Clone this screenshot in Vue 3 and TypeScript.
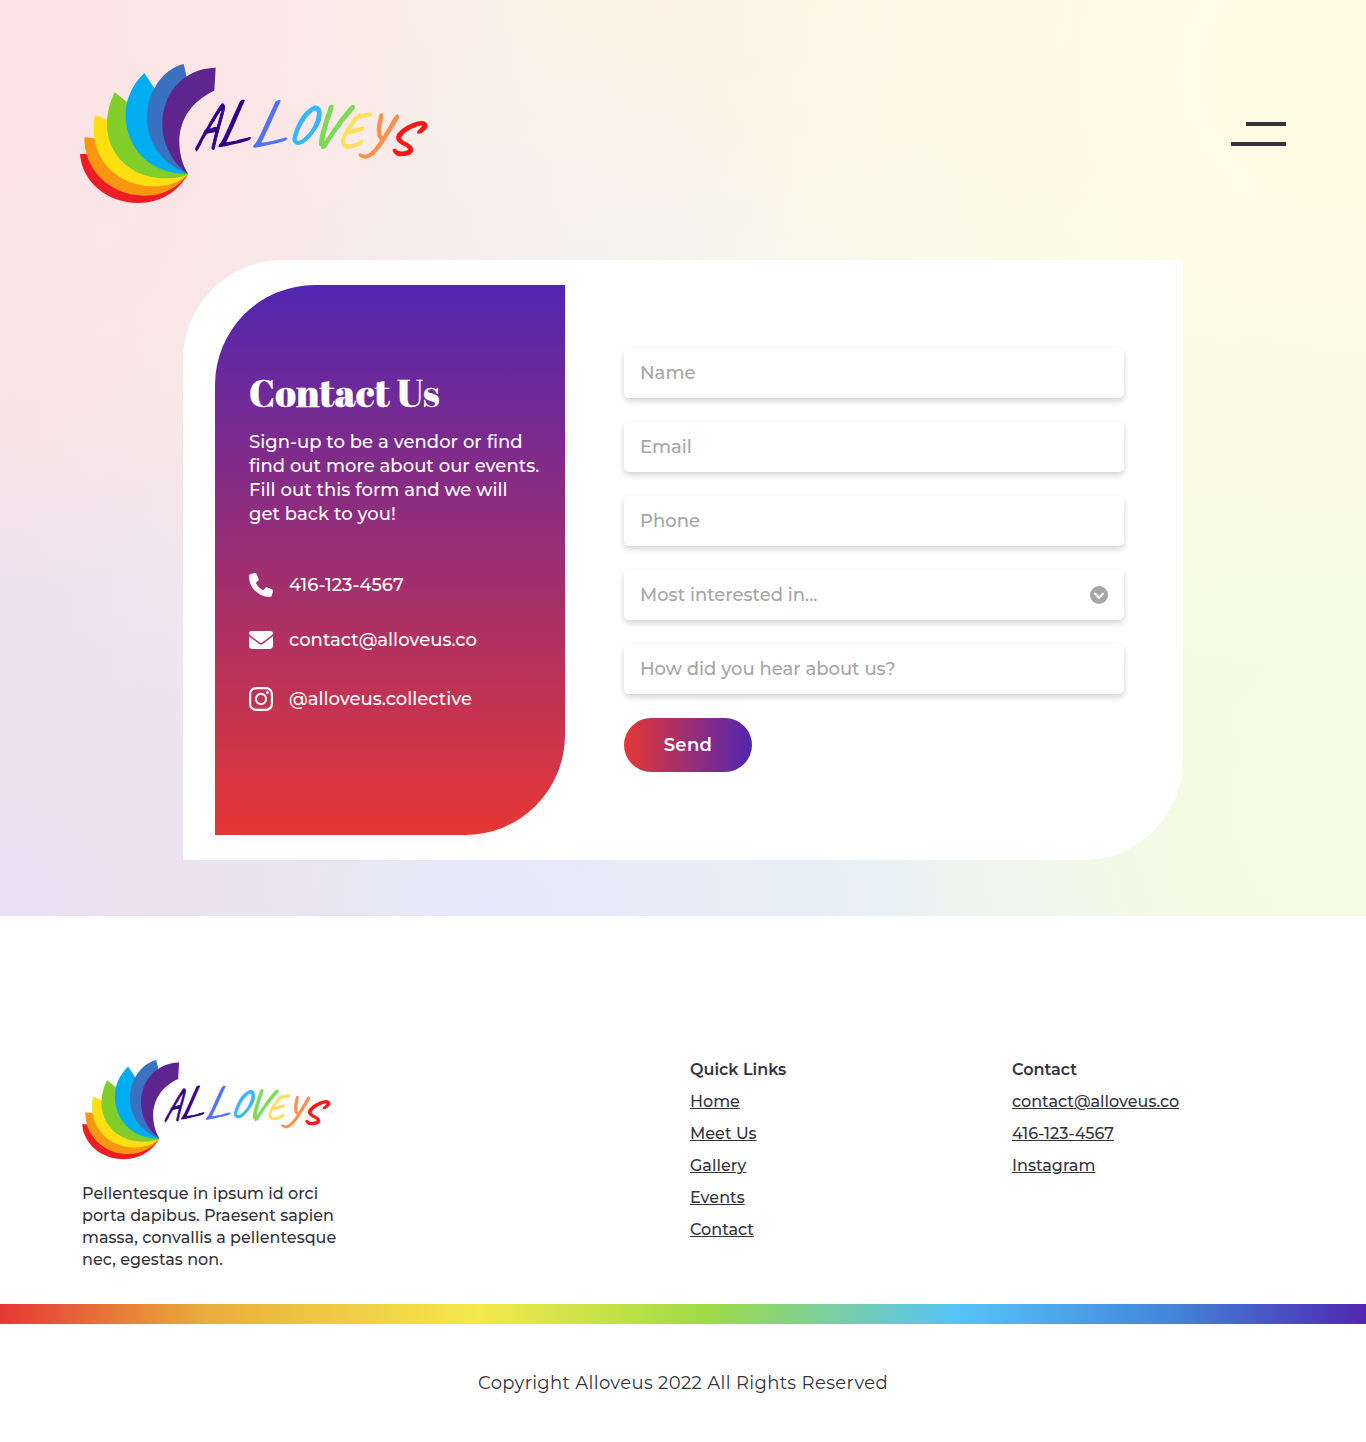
<script setup lang="ts">
interface Field { text: string; select?: boolean }

const petals = [
  { fill: '#ee1c25', d: 'M30 312H62L354 372C325 425 270 459 205 459C110 459 36 395 30 312Z' },
  { fill: '#f7960f', d: 'M43 261L80 266L354 372C325 412 280 437 225 437C115 437 41 355 43 261Z' },
  { fill: '#ffde12', d: 'M76 195L116 212L354 372C330 397 295 409 250 409C130 409 50 310 76 195Z' },
  { fill: '#81ce2a', d: 'M134 127L176 160L354 372C340 381 320 385 285 385C150 385 68 262 134 127Z' },
  { fill: '#00adf1', d: 'M223 69L258 122L290 260L354 372C235 372 167 290 167 195C167 150 185 105 223 69Z' },
  { fill: '#3a71c1', d: 'M341 42L352 90L285 200L300 300L354 372C285 345 231 285 231 205C231 135 270 60 341 42Z' },
  { fill: '#5f258f', d: 'M437 53C340 55 277 130 277 222C277 285 310 340 354 372C338 345 328 310 328 275C328 205 370 150 433 122Z' },
]

// One transform per letter of the wordmark: each has its own size, slant and baseline.
const letters = [
  { c: 'A', fill: '#31008c', m: '1.25 0 -.42 1.95 371 294', w: 2 },
  { c: 'L', fill: '#31008c', m: '2.1 -.5 -.2 1.33 442 292', w: 3, script: true },
  { c: 'L', fill: '#5271ff', m: '2.2 -.5 -.2 1.33 546 293', w: 3, script: true },
  { c: 'O', fill: '#38b6ff', m: '1.5 0 -.3 1.62 650 276', w: 3 },
  { c: 'V', fill: '#7ed957', m: '1.8 0 -.35 1.75 712 284', w: 2 },
  { c: 'E', fill: '#ffde59', m: '1.4 0 -.25 1.55 800 291', w: 2 },
  { c: 'y', fill: '#ff914d', m: '2.3 0 -.35 2.3 882 280', w: 0 },
  { c: 'S', fill: '#ff1616', m: '1.65 0 -.2 1.35 948 308', w: 4 },
]

const intro = [
  'Sign-up to be a vendor or find',
  'find out more about our events.',
  'Fill out this form and we will',
  'get back to you!',
]

const fields: Field[] = [
  { text: 'Name' },
  { text: 'Email' },
  { text: 'Phone' },
  { text: 'Most interested in...', select: true },
  { text: 'How did you hear about us?' },
]

const about = [
  'Pellentesque in ipsum id orci',
  'porta dapibus. Praesent sapien',
  'massa, convallis a pellentesque',
  'nec, egestas non.',
]

const columns = [
  { title: 'Quick Links', links: ['Home', 'Meet Us', 'Gallery', 'Events', 'Contact'] },
  { title: 'Contact', links: ['contact@alloveus.co', '416-123-4567', 'Instagram'] },
]
</script>

<template>
  <div class="page">
    <main class="hero">
      <header class="top">
        <svg class="logo" viewBox="30 42 1044 420" role="img" aria-label="Alloveus">
          <path v-for="p in petals" :key="p.fill" :d="p.d" :fill="p.fill" />
          <text v-for="(l, i) in letters" :key="i" :fill="l.fill" :stroke="l.fill" :stroke-width="l.w" :class="{ script: l.script }" :transform="`matrix(${l.m})`">{{ l.c }}</text>
        </svg>
        <button class="burger" aria-label="Menu"><i></i><i></i></button>
      </header>

      <section class="card">
        <aside class="panel">
          <h1>Contact Us</h1>
          <p class="intro"><span v-for="l in intro" :key="l">{{ l }}</span></p>
          <ul class="reach">
            <li>
              <svg width="24" height="24" viewBox="0 0 512 512" fill="currentColor"><path d="M164.9 24.6c-7.7-18.6-28-28.5-47.4-23.2l-88 24C12.1 30.200 0 46 0 64c0 247.400 200.600 448 448 448 18 0 33.800-12.100 38.600-29.500l24-88c5.300-19.400-4.600-39.700-23.200-47.400l-96-40c-16.300-6.800-35.200-2.100-46.300 11.600L304.700 368C234.300 334.700 177.300 277.700 144 207.300L193.300 167c13.700-11.200 18.400-30 11.600-46.300l-40-96z" /></svg>
              <span>416-123-4567</span>
            </li>
            <li>
              <svg width="24" height="24" viewBox="0 0 512 512" fill="currentColor"><path d="M48 64C21.500 64 0 85.500 0 112c0 15.100 7.100 29.300 19.200 38.400L236.800 313.600c11.400 8.500 27 8.500 38.400 0L492.800 150.400c12.100-9.100 19.200-23.300 19.200-38.400 0-26.500-21.500-48-48-48H48zM0 176v208c0 35.300 28.700 64 64 64h384c35.300 0 64-28.700 64-64V176L294.400 339.200c-22.800 17.100-54 17.100-76.800 0L0 176z" /></svg>
              <span>contact@alloveus.co</span>
            </li>
            <li>
              <svg width="24" height="24" viewBox="0 0 24 24" fill="none" stroke="currentColor" stroke-width="2.2"><rect x="1.100" y="1.100" width="21.800" height="21.800" rx="6" /><circle cx="12" cy="12" r="5.050" /><circle cx="18.400" cy="5.600" r="1.450" fill="currentColor" stroke="none" /></svg>
              <span>@alloveus.collective</span>
            </li>
          </ul>
        </aside>

        <form class="form" @submit.prevent>
          <div v-for="f in fields" :key="f.text" class="field">
            <input type="text" :placeholder="f.text" :readonly="f.select">
            <svg v-if="f.select" width="18" height="18" viewBox="0 0 18 18"><circle cx="9" cy="9" r="9" fill="#a6a6a6" /><path d="M5.100 7.800L9 11.600L12.900 7.800" fill="none" stroke="#fff" stroke-width="2.300" stroke-linecap="round" stroke-linejoin="round" /></svg>
          </div>
          <button class="send">Send</button>
        </form>
      </section>
    </main>

    <footer>
      <div class="cols">
        <div class="about">
          <svg class="logo small" viewBox="30 42 1044 420" role="img" aria-label="Alloveus">
            <path v-for="p in petals" :key="p.fill" :d="p.d" :fill="p.fill" />
            <text v-for="(l, i) in letters" :key="i" :fill="l.fill" :stroke="l.fill" :stroke-width="l.w" :class="{ script: l.script }" :transform="`matrix(${l.m})`">{{ l.c }}</text>
          </svg>
          <p><span v-for="l in about" :key="l">{{ l }}</span></p>
        </div>
        <nav v-for="c in columns" :key="c.title">
          <h2>{{ c.title }}</h2>
          <a v-for="l in c.links" :key="l" href="#">{{ l }}</a>
        </nav>
      </div>
      <div class="rainbow"></div>
      <p class="copy">Copyright Alloveus 2022 All Rights Reserved</p>
    </footer>
  </div>
</template>

<style>
body { background: #fff; }
</style>

<style scoped>
* { box-sizing: border-box; margin: 0; padding: 0; }
.page {
  width: 100%;
  font-family: Montserrat, Inter, "Liberation Sans", sans-serif;
  font-size: 18px;
  font-weight: 500;
  letter-spacing: 0.02px;
  color: #35343d;
}
.hero {
  height: 916px;
  padding-top: 64px;
  background:
    radial-gradient(ellipse 560px 600px at 0% 0%, #fee4e4 0%, #fee4e400 100%),
    radial-gradient(ellipse 720px 620px at 100% 8%, #fffce6 20%, #fffce600 100%),
    radial-gradient(ellipse 620px 280px at 50% 0%, #fdf2e4 0%, #fdf2e400 100%),
    radial-gradient(ellipse 480px 600px at 0% 100%, #e8e0f2 10%, #e8e0f200 100%),
    radial-gradient(ellipse 480px 420px at 36% 100%, #e4e8fa 0%, #e4e8fa00 100%),
    radial-gradient(ellipse 560px 620px at 100% 88%, #f3fbe2 15%, #f3fbe200 100%),
    radial-gradient(ellipse 500px 500px at 62% 100%, #e7f2f5 15%, #e7f2f500 100%),
    linear-gradient(90deg, #f8e4e8 0%, #f4f2ef 44%, #f5f8eb 62%, #f8fbe6 100%);
}
.top {
  display: flex;
  justify-content: space-between;
  align-items: center;
  height: 140px;
  padding: 0 80px;
}
.logo { display: block; width: 348px; height: 140px; overflow: visible; }
.logo.small { width: 249px; height: 100px; }
.logo text { font: 500 100px Caveat, cursive; letter-spacing: 0; }
.logo .script { font: 400 100px "Bad Script", Caveat, cursive; }
.burger {
  display: flex;
  flex-direction: column;
  align-items: flex-end;
  gap: 16px;
  border: 0;
  background: none;
}
.burger i { width: 55px; height: 4px; background: #35343d; }
.burger i:first-child { width: 40px; }
.card {
  display: flex;
  align-items: center;
  width: 1000px;
  height: 600px;
  margin: 56px auto 0;
  padding-left: 32px;
  background: #fff;
  border-radius: 100px 0;
}
.panel {
  width: 350px;
  height: 550px;
  padding: 83px 0 0 34px;
  color: #fff;
  background: linear-gradient(180deg, #5126b1, #e63734);
  border-radius: 100px 0;
}
h1 {
  font: 400 38px/50px "Abril Fatface", "Liberation Serif", serif;
  letter-spacing: 0.3px;
  -webkit-text-stroke: 0.4px #fff;
  white-space: nowrap;
}
.intro { margin-top: 12px; line-height: 24px; letter-spacing: 0.03px; }
.intro span, .about p span { display: block; white-space: nowrap; }
.reach { margin-top: 47px; list-style: none; }
.reach li {
  display: flex;
  align-items: center;
  gap: 16px;
  height: 24px;
  margin-bottom: 31px;
  white-space: nowrap;
}
.reach li:nth-child(2) { margin-bottom: 35px; }
.form {
  display: flex;
  flex-direction: column;
  gap: 24px;
  width: 500px;
  margin-left: 59px;
}
.field {
  display: flex;
  align-items: center;
  height: 50px;
  padding: 0 16px;
  background: #fff;
  border-radius: 5px;
  box-shadow: 0 3px 6px rgba(0, 0, 0, 0.18);
}
.field input {
  flex: 1;
  min-width: 0;
  height: 100%;
  border: 0;
  outline: 0;
  background: none;
  font: inherit;
}
.field input::placeholder { color: #a6a6a6; opacity: 1; }
.send {
  width: 128px;
  height: 54px;
  border: 0;
  border-radius: 27px;
  color: #fff;
  font: inherit;
  font-weight: 600;
  letter-spacing: 0.36px;
  background: linear-gradient(90deg, #e63734, #5126b1);
}
.cols {
  display: grid;
  grid-template-columns: 608px 322px 1fr;
  height: 388px;
  padding: 138px 0 0 82px;
  font-size: 16px;
}
.about { padding-top: 6px; }
.about p { margin-top: 23px; line-height: 22px; }
nav { display: flex; flex-direction: column; align-items: flex-start; line-height: 32px; white-space: nowrap; }
nav h2 { font-size: 16px; font-weight: 600; line-height: 32px; }
nav a { color: inherit; }
.rainbow {
  height: 20px;
  background: linear-gradient(90deg, #e63734 0%, #e9ad3b 15%, #f5e94d 35%, #9fdb43 51.500%, #56c3fa 70%, #4285d8 86%, #5126b1 100%);
}
.copy { height: 118px; line-height: 118px; text-align: center; font-weight: 400; letter-spacing: 0.36px; }
</style>
